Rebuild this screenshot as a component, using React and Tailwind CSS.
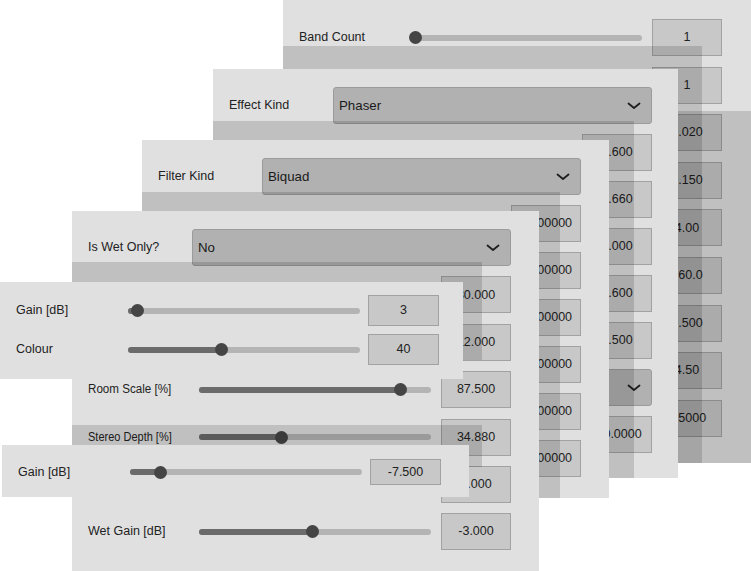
import React from 'react';

function Chevron() {
  return (
    <svg width="14" height="8" viewBox="0 0 14 8" className="shrink-0">
      <polyline points="1.5,1.5 7,6 12.5,1.5" fill="none" stroke="#1e1e1e" strokeWidth="1.8" strokeLinecap="round" strokeLinejoin="round" />
    </svg>
  );
}

function Slider({ pos }) {
  return (
    <div className="relative h-[13px] w-[232px] shrink-0">
      <div className="absolute left-0 right-0 top-[3.5px] h-[6px] rounded-full bg-[#b4b4b4]" />
      <div className="absolute left-0 top-[3.5px] h-[6px] rounded-full bg-[#6b6b6b]" style={{ width: pos }} />
      <div className="absolute top-0 h-[13px] w-[13px] rounded-full bg-[#454545]" style={{ left: pos - 6.5 }} />
    </div>
  );
}

function ValueBox({ text }) {
  return (
    <div className="flex h-full w-[70px] shrink-0 items-center justify-center border border-[#a2a2a2] bg-[#c8c8c8] text-[12.5px] text-[#222]">
      {text}
    </div>
  );
}

function SliderRow({ label, pos, value, squeeze }) {
  return (
    <div className="flex h-[37px] shrink-0 items-center pl-4">
      <div className="w-[111px] shrink-0 overflow-visible whitespace-nowrap text-[12.5px] text-[#222]">
        <span className={squeeze === 'room' ? 'inline-block origin-left scale-x-[0.93]' : squeeze === 'stereo' ? 'inline-block origin-left scale-x-[0.88]' : ''}>
          {label}
        </span>
      </div>
      {pos != null ? <Slider pos={pos} /> : <div className="w-[232px] shrink-0" />}
      <div className="ml-[10px] h-full">
        <ValueBox text={value} />
      </div>
    </div>
  );
}

function DropRow({ label, value }) {
  return (
    <div className="flex h-[37px] shrink-0 items-center pl-4">
      <div className="w-[104px] shrink-0 whitespace-nowrap text-[12.5px] text-[#222]">{label}</div>
      <div className="flex h-full w-[319px] shrink-0 items-center justify-between rounded-[3px] border border-[#9b9b9b] bg-[#b1b1b1] pl-[5px] pr-[10px] text-[13.3px] text-[#1a1a1a]">
        <span>{value}</span>
        <Chevron />
      </div>
    </div>
  );
}

function SmallRow({ label, pos, value, tall }) {
  return (
    <div className={tall ? 'flex h-[31px] shrink-0 items-center pl-4' : 'flex h-[26px] shrink-0 items-center pl-4'}>
      <div className="w-[112px] shrink-0 whitespace-nowrap text-[12.5px] text-[#222]">{label}</div>
      <Slider pos={pos} />
      <div className="ml-[8px] flex h-full w-[71px] shrink-0 items-center justify-center border border-[#a2a2a2] bg-[#c8c8c8] text-[12.5px] text-[#222]">
        {value}
      </div>
    </div>
  );
}

const aValues = ['0.020', '0.150', '4.00', '160.0', '0.500', '4.50', '0.5000'];
const bValues = ['0.600', '0.660', '0.000', '0.600', '0.500'];
const cValues = ['1.000000', '0.000000', '1.000000', '0.000000', '0.000000', '1.000000'];

export default function App() {
  return (
    <div className="relative h-[571px] w-[751px] overflow-hidden bg-white font-['Liberation_Sans',Arial,sans-serif]">
      {/* Band Count window */}
      <div className="absolute left-[283px] top-0 h-[463px] w-[468px] bg-[#e0e0e0]">
        <div className="flex flex-col gap-[10.6px] pt-[19px]">
          <SliderRow label="Band Count" pos={5} value="1" />
          <SliderRow label="" value="1" />
          {aValues.map((v, i) => (
            <SliderRow key={i} label="" value={v} />
          ))}
        </div>
        <div className="absolute left-0 top-[46px] h-[417px] w-[419px] bg-black/[0.14]" />
        <div className="absolute left-[395px] top-[111px] h-[352px] w-[73px] bg-black/[0.14]" />
      </div>

      {/* Effect Kind window */}
      <div className="absolute left-[213px] top-[69px] h-[409px] w-[465px] bg-[#e0e0e0]">
        <div className="flex flex-col gap-[10px] pt-[18px]">
          <DropRow label="Effect Kind" value="Phaser" />
          {bValues.map((v, i) => (
            <SliderRow key={i} label="" value={v} />
          ))}
          <DropRow label="" value="" />
          <SliderRow label="" value="-10.0000" />
        </div>
        <div className="absolute bottom-0 left-0 top-[52px] w-[421px] bg-black/[0.14]" />
      </div>

      {/* Filter Kind window */}
      <div className="absolute left-[142px] top-[140px] h-[358px] w-[467px] bg-[#e0e0e0]">
        <div className="flex flex-col gap-[10px] pt-[18px]">
          <DropRow label="Filter Kind" value="Biquad" />
          {cValues.map((v, i) => (
            <SliderRow key={i} label="" value={v} />
          ))}
        </div>
        <div className="absolute bottom-0 left-0 top-[52px] w-[418px] bg-black/[0.14]" />
      </div>

      {/* Is Wet Only window */}
      <div className="absolute left-[72px] top-[211px] h-[360px] w-[467px] bg-[#e0e0e0]">
        <div className="flex flex-col gap-[10.4px] pt-[18px]">
          <DropRow label="Is Wet Only?" value="No" />
          <SliderRow label="" value="30.000" />
          <SliderRow label="" value="12.000" />
          <SliderRow label="Room Scale [%]" pos={201} value="87.500" squeeze="room" />
          <SliderRow label="Stereo Depth [%]" pos={82} value="34.880" squeeze="stereo" />
          <SliderRow label="" value="0.000" />
          <SliderRow label="Wet Gain [dB]" pos={113} value="-3.000" />
        </div>
        <div className="absolute left-0 top-[51px] h-[98px] w-[410px] bg-black/[0.14]" />
        <div className="absolute left-0 top-[214px] h-[42px] w-[410px] bg-black/[0.14]" />
      </div>

      {/* Gain / Colour window */}
      <div className="absolute left-0 top-[282px] h-[97px] w-[463px] bg-[#e0e0e0]">
        <div className="flex flex-col gap-[8px] pt-[13px]">
          <SmallRow label="Gain [dB]" pos={9} value="3" tall />
          <SmallRow label="Colour" pos={93} value="40" tall />
        </div>
      </div>

      {/* Gain window */}
      <div className="absolute left-[2px] top-[445px] h-[52px] w-[467px] bg-[#e0e0e0]">
        <div className="flex flex-col pt-[14px]">
          <SmallRow label="Gain [dB]" pos={30} value="-7.500" />
        </div>
      </div>
    </div>
  );
}
